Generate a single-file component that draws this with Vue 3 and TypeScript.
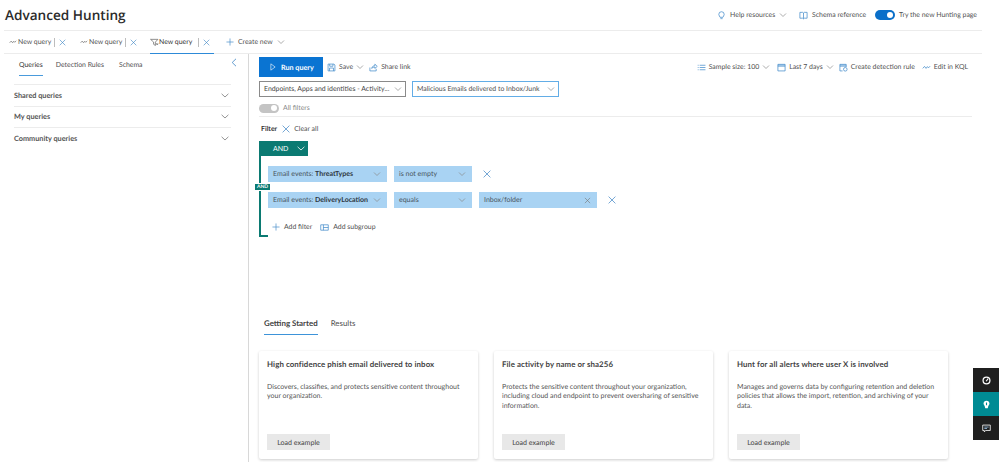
<script setup lang="ts">
const tabs = [
  { icon: 'kql', active: false },
  { icon: 'kql', active: false },
  { icon: 'filter', active: true },
]
const sections = ['Shared queries', 'My queries', 'Community queries']
const cards = [
  { title: 'High confidence phish email delivered to inbox', body: 'Discovers, classifies, and protects sensitive content throughout your organization.' },
  { title: 'File activity by name or sha256', body: 'Protects the sensitive content throughout your organization, including cloud and endpoint to prevent oversharing of sensitive information.' },
  { title: 'Hunt for all alerts where user X is involved', body: 'Manages and governs data by configuring retention and deletion policies that allows the import, retention, and archiving of your data.' },
]
</script>

<template>
  <div class="page">
    <header class="head">
      <h1 class="title">Advanced Hunting</h1>
      <div class="head-actions">
        <span class="act">
          <svg class="ic" viewBox="0 0 10 10"><path d="M3.4 7C3.2 5.8 2 5.400 2 3.800a3 3 0 0 1 6 0C8 5.400 6.800 5.800 6.600 7zM3.800 8.500h2.400" class="s-blue" /></svg>
          Help resources
          <svg class="chev" viewBox="0 0 8 8"><path d="M1 2.500l3 3 3-3" /></svg>
        </span>
        <span class="act gap-l">
          <svg class="ic" viewBox="0 0 10 10"><path d="M1 1.500h3.200L5 2.200l.8-.7H9v6.500H5.800L5 8.700 4.200 8H1zM5 2.200v6.500" class="s-blue" /></svg>
          <span>Schema reference</span>
        </span>
        <span class="act gap-m">
          <span class="switch on"><span class="knob"></span></span>
          Try the new Hunting page
        </span>
      </div>
    </header>

    <nav class="tabbar">
      <span v-for="(t, i) in tabs" :key="i" class="qtab" :class="{ active: t.active }">
        <svg v-if="t.icon === 'kql'" class="ic-s" viewBox="0 0 10 10"><path d="M.8 6l2-2.200L4.500 6 6 4l1.200 1.400L9 3.500" class="s-grey" /></svg>
        <svg v-else class="ic-s wide" viewBox="0 0 10 10"><path d="M.6 1.500h8.200L6 4.500v3.800L4 7V4.500zM7 5.800l2 2M9 5.800l-2 2" class="s-grey" /></svg>
        <span class="qname">New query</span>
        <i class="pipe"></i>
        <svg class="x" viewBox="0 0 8 8"><path d="M.8.8l6.400 6.400M7.200.8L.8 7.200" /></svg>
      </span>
      <span class="create">
        <svg class="plus" viewBox="0 0 9 9"><path d="M4.500.5v8M.5 4.500h8" /></svg>
        Create new
        <svg class="chev" viewBox="0 0 8 8"><path d="M1 2.500l3 3 3-3" /></svg>
      </span>
    </nav>

    <main class="main">
      <aside class="side">
        <svg class="collapse" viewBox="0 0 6 9"><path d="M5 .8L1.200 4.500 5 8.200" /></svg>
        <div class="side-tabs">
          <span class="stab on">Queries</span>
          <span class="stab det">Detection Rules</span>
          <span class="stab">Schema</span>
        </div>
        <div v-for="s in sections" :key="s" class="acc">
          <span>{{ s }}</span>
          <svg class="acc-chev" viewBox="0 0 8 5"><path d="M.6.8L4 4 7.400.8" /></svg>
        </div>
      </aside>

      <section class="content">
        <div class="toolbar">
          <button class="run">
            <svg class="play" viewBox="0 0 7 9"><path d="M1 .8L6 4.500 1 8.200z" /></svg>
            Run query
          </button>
          <span class="tool save">
            <svg class="ic" viewBox="0 0 10 10"><path d="M1.200 1.200h6.600l1 1v6.600H1.200zM3 1.200v2.400h3.600V1.200M2.800 8.800V5.600h4.400v3.200" class="s-blue" /></svg>
            Save
            <svg class="chev" viewBox="0 0 8 8"><path d="M1 2.500l3 3 3-3" /></svg>
          </span>
          <span class="tool share">
            <svg class="ic" viewBox="0 0 10 10"><path d="M1 5v3.800h7V6.500M3 6c.2-2 1.800-3 3.500-3V1.300L9.200 3.800 6.500 6V4.400C5 4.400 3.800 5 3 6z" class="s-blue" /></svg>
            Share link
          </span>
          <span class="spacer"></span>
          <span class="tool">
            <svg class="ic" viewBox="0 0 10 10"><path d="M.8 2.500h1M.8 5h1M.8 7.500h1M3 2.500h6.400M3 5h6.400M3 7.500h6.400" class="s-blue" /></svg>
            Sample size: 100
            <svg class="chev" viewBox="0 0 8 8"><path d="M1 2.500l3 3 3-3" /></svg>
          </span>
          <span class="tool">
            <svg class="ic" viewBox="0 0 10 10"><path d="M1 1.500h8v2H1z" class="band" /><path d="M1 1.500h8v7.300H1zM1 3.500h8" class="s-blue" /></svg>
            Last 7 days
            <svg class="chev" viewBox="0 0 8 8"><path d="M1 2.500l3 3 3-3" /></svg>
          </span>
          <span class="tool rule">
            <svg class="ic" viewBox="0 0 10 10"><path d="M1 1.500h7v2H1z" class="band" /><path d="M1 1.500h7v3M4 8.800H1v-7.300M1 3.500h7" class="s-blue" /><circle cx="7" cy="7" r="2" class="s-blue" /></svg>
            Create detection rule
          </span>
          <span class="tool">
            <svg class="ic" viewBox="0 0 10 10"><path d="M.8 6l2-2.200L4.500 6 6 4l1.200 1.400L9 3.500" class="s-blue" /></svg>
            Edit in KQL
          </span>
        </div>

        <div class="selects">
          <span class="sel dark">
            <span>Endpoints, Apps and identities - Activity...</span>
            <svg class="chev" viewBox="0 0 8 8"><path d="M1 2.500l3 3 3-3" /></svg>
          </span>
          <span class="sel light">
            <span>Malicious Emails delivered to Inbox/Junk</span>
            <svg class="chev" viewBox="0 0 8 8"><path d="M1 2.500l3 3 3-3" /></svg>
          </span>
        </div>

        <div class="allf">
          <span class="switch off"><span class="knob"></span></span>
          All filters
        </div>

        <div class="filter-head">
          <b>Filter</b>
          <svg class="x big" viewBox="0 0 8 8"><path d="M.6.6l6.800 6.800M7.400.6L.6 7.400" /></svg>
          <span>Clear all</span>
        </div>

        <div class="and-btn">
          <span>AND</span>
          <svg class="and-chev" viewBox="0 0 8 5"><path d="M.6.8L4 4 7.400.8" /></svg>
        </div>

        <div class="group">
          <span class="and-tag">AND</span>
          <div class="frow">
            <span class="fld f1"><span>Email events: <b>ThreatTypes</b></span><svg class="chev" viewBox="0 0 8 8"><path d="M1 2.500l3 3 3-3" /></svg></span>
            <span class="fld f2"><span>is not empty</span><svg class="chev" viewBox="0 0 8 8"><path d="M1 2.500l3 3 3-3" /></svg></span>
            <svg class="x rowx" viewBox="0 0 8 8"><path d="M.6.6l6.800 6.800M7.400.6L.6 7.400" /></svg>
          </div>
          <div class="frow">
            <span class="fld f1"><span>Email events: <b>DeliveryLocation</b></span><svg class="chev" viewBox="0 0 8 8"><path d="M1 2.500l3 3 3-3" /></svg></span>
            <span class="fld f2"><span>equals</span><svg class="chev" viewBox="0 0 8 8"><path d="M1 2.500l3 3 3-3" /></svg></span>
            <span class="fld f3"><span>Inbox/folder</span><svg class="chev-x" viewBox="0 0 8 8"><path d="M1 1l6 6M7 1L1 7" /></svg></span>
            <svg class="x rowx" viewBox="0 0 8 8"><path d="M.6.6l6.800 6.800M7.400.6L.6 7.400" /></svg>
          </div>
          <div class="adds">
            <span class="add"><svg class="plus" viewBox="0 0 9 9"><path d="M4.500.5v8M.5 4.500h8" /></svg>Add filter</span>
            <span class="add"><svg class="ic" viewBox="0 0 10 8"><path d="M.8 1h8.400v6H.8zM3.800 1v6M3.800 4h5.400" class="s-blue" /></svg>Add subgroup</span>
          </div>
        </div>

        <div class="rtabs">
          <span class="rtab on">Getting Started</span>
          <span class="rtab">Results</span>
        </div>

        <div class="cards">
          <article v-for="c in cards" :key="c.title" class="card">
            <h3>{{ c.title }}</h3>
            <p>{{ c.body }}</p>
            <button class="load">Load example</button>
          </article>
        </div>
      </section>
    </main>

    <div class="widget">
      <span class="w-item">
        <svg viewBox="0 0 10 10"><circle cx="5" cy="5" r="3.800" fill="none" stroke="#fff" stroke-width="1.400" /><path d="M6.800 3L4.600 5.800" stroke="#fff" stroke-width="1.200" /></svg>
      </span>
      <span class="w-item teal">
        <svg viewBox="0 0 10 10"><path d="M5 .8C7 .8 8.300 2.200 8.300 4 8.300 5.400 6.800 6.400 6.400 9.200H3.600C3.200 6.400 1.700 5.400 1.700 4 1.700 2.200 3 .8 5 .8z" fill="#fff" /><path d="M5 2.800v3" stroke="#008b94" stroke-width="1.200" /></svg>
      </span>
      <span class="w-item">
        <svg viewBox="0 0 10 10"><path d="M.8 1.200h8.400v6H4L2.600 8.800V7.200H.8z" fill="none" stroke="#fff" stroke-width=".9" /><path d="M2.600 3.400h4.800M2.600 5h3" fill="none" stroke="#9fc4e6" stroke-width=".9" /></svg>
      </span>
    </div>
  </div>
</template>

<style>
html, body { margin: 0; background: #fff; }
</style>

<style scoped>
.page {
  position: relative;
  width: 999px;
  height: 462px;
  overflow: hidden;
  background: #fff;
  font-family: "Lato", "Open Sans", sans-serif;
  font-size: 6.9px;
  text-rendering: geometricPrecision;
  color: #505050;
  white-space: nowrap;
  display: flex;
  flex-direction: column;
}
svg { display: block; flex: none; }
.s-blue { fill: none; stroke: #3f88c8; stroke-width: .8; }
.band { fill: #b9d6ef; }
.s-grey { fill: none; stroke: #666; stroke-width: .8; }

.head {
  height: 30px;
  flex: none;
  display: flex;
  align-items: center;
  justify-content: space-between;
  padding: 0 22px 0 5px;
  box-sizing: border-box;
}
.title { margin: 0 0 2px; font-family: "Open Sans", sans-serif; font-size: 13.600px; font-weight: 600; color: #2b2b2b; }
.head-actions { display: flex; align-items: center; }
.act { display: flex; align-items: center; gap: 4px; }
.gap-l { margin-left: 12px; }
.gap-m { margin-left: 9px; gap: 4px; }
.ic { width: 9px; height: 9px; }
.chev { width: 8px; height: 8px; }
.chev path { fill: none; stroke: #8a8a8a; stroke-width: .7; }

.switch { width: 20px; height: 10px; border-radius: 5px; position: relative; display: inline-block; flex: none; }
.switch.on { background: #0a6fc9; }
.switch.off { background: #c4c4c4; }
.knob { position: absolute; right: 2px; top: 2px; width: 6px; height: 6px; border-radius: 50%; background: #fff; }

.tabbar {
  margin: 0 17px 0 4px;
  height: 24px;
  flex: none;
  display: flex;
  align-items: stretch;
  border-top: 1px solid #ececec;
  border-bottom: 1px solid #ececec;
  box-sizing: border-box;
}
.qtab {
  display: flex;
  align-items: center;
  padding-left: 5px;
  width: 71px;
  box-sizing: border-box;
}
.qtab.active { color: #333; border-bottom: 1px solid #2d8ad8; height: 23px; margin: 0 0 -1px 4px; padding-left: 0; width: 64px; }
.qname { width: 34px; margin-left: 1px; }
.active .qname { width: 37px; margin-left: 0; }
.ic-s { width: 8px; height: 8px; }
.ic-s.wide { width: 9px; height: 9px; }
.pipe { width: 1px; height: 9px; background: #bdbdbd; margin: 0 4px 0 2px; }
.x { width: 7px; height: 7px; }
.x path { fill: none; stroke: #3b83c3; stroke-width: .7; }
.create { display: flex; align-items: center; gap: 4px; margin-left: 12px; }
.plus { width: 8px; height: 8px; }
.plus path { fill: none; stroke: #4d8fca; stroke-width: .8; }

.main { flex: 1; display: flex; min-height: 0; }
.side {
  width: 245px;
  margin-left: 4px;
  box-sizing: border-box;
  border-right: 1px solid #d8d8d8;
  position: relative;
  padding: 0 17px 0 10px;
  flex: none;
}
.collapse { position: absolute; right: 11px; top: 4px; width: 6px; height: 9px; }
.collapse path { fill: none; stroke: #3b83c3; stroke-width: .8; }
.side-tabs { display: flex; height: 30px; gap: 15px; padding-left: 5px; align-items: flex-start; }
.stab { padding-top: 7px; height: 22px; box-sizing: border-box; }
.stab.on { color: #333; border-bottom: 1px solid #4a9bdc; }
.det { margin-left: -2px; }
.acc {
  height: 21.500px;
  border-top: 1px solid #ececec;
  display: flex;
  align-items: center;
  justify-content: space-between;
  padding: 0 1px 0 0;
  font-size: 7.300px;
  font-weight: 700;
  color: #555;
  box-sizing: border-box;
}
.acc-chev { width: 8px; height: 5px; margin-right: 1px; }
.acc-chev path { fill: none; stroke: #666; stroke-width: .7; }

.content { flex: 1; padding: 3px 27px 0 10px; min-width: 0; }
.toolbar { display: flex; align-items: center; height: 20px; gap: 7px; padding-right: 4px; }
.spacer { flex: 1; }
.run {
  width: 64px;
  height: 20px;
  border: 0;
  padding: 0 0 0 11px;
  background: #0a74d2;
  color: #fff;
  font: 700 7.200px "Lato", sans-serif;
  text-rendering: geometricPrecision;
  display: flex;
  align-items: center;
  gap: 5px;
}
.play { width: 6px; height: 8px; }
.play path { fill: none; stroke: #fff; stroke-width: .7; }
.tool { display: flex; align-items: center; gap: 3px; white-space: nowrap; }
.save { margin-left: -3px; }
.share { margin-left: -2px; }
.rule { margin-left: -2px; }
.sel {
  height: 16px;
  width: 147px;
  box-sizing: border-box;
  display: flex;
  align-items: center;
  justify-content: space-between;
  padding: 0 3px 0 4px;
}
.selects { display: flex; gap: 6px; margin-top: 4px; }
.sel.dark { border: 1px solid #8a8a8a; color: #444; }
.sel.light { border: 1px solid #63ade6; }
.allf { display: flex; align-items: center; gap: 4px; height: 10px; margin-top: 6px; color: #8a8a8a; }
.allf .switch { width: 20px; height: 9px; }
.allf .knob { top: 1.500px; }
.filter-head {
  margin-top: 3px;
  border-top: 1px solid #ececec;
  padding-top: 5px;
  height: 13px;
  display: flex;
  align-items: center;
  gap: 4px;
}
.filter-head b { font-weight: 700; color: #333; margin-right: 1px; margin-left: 2px; }
.big { width: 8px; height: 8px; }
.and-btn {
  margin-top: 6px;
  width: 49px;
  height: 15px;
  background: #0b7a72;
  color: #fff;
  font-size: 7px;
  display: flex;
  align-items: center;
  justify-content: space-between;
  padding: 0 3px 0 14px;
  box-sizing: border-box;
}
.and-chev { width: 8px; height: 5px; }
.and-chev path { fill: none; stroke: #fff; stroke-width: .8; }
.group {
  position: relative;
  height: 81px;
  box-sizing: border-box;
  border-left: 2px solid #0b7a72;
  padding: 10px 0 0 7px;
}
.group::after {
  content: '';
  position: absolute;
  left: 0;
  bottom: 0;
  width: 7px;
  height: 2px;
  background: #0b7a72;
}
.and-tag {
  position: absolute;
  left: -7px;
  top: 27px;
  background: #0b7a72;
  color: #fff;
  font-size: 5px;
  font-weight: 700;
  line-height: 6px;
  width: 15px;
  text-align: center;
  border: 1px solid #fff;
}
.frow { display: flex; align-items: center; gap: 7px; height: 16px; margin-bottom: 10px; }
.fld {
  height: 16px;
  background: #a9d3f3;
  box-sizing: border-box;
  display: flex;
  align-items: center;
  justify-content: space-between;
  padding: 0 6px 0 5px;
  font-size: 7px;
  color: #4a5560;
}
.fld b { font-weight: 700; color: #2d3640; }
.f1 { width: 119px; }
.f2 { width: 78px; }
.f3 { width: 118px; }
.chev-x { width: 7px; height: 7px; }
.chev-x path { fill: none; stroke: #777; stroke-width: .7; }
.rowx { margin-left: 4px; width: 8px; height: 8px; }
.adds { display: flex; gap: 8px; padding-left: 4px; margin-top: 14px; height: 10px; }
.add { display: flex; align-items: center; gap: 4px; }
.rtabs { display: flex; gap: 13px; margin-top: 79px; padding-left: 5px; height: 19px; font-size: 7.900px; }
.rtab { padding-top: 2px; box-sizing: border-box; height: 19px; }
.rtab.on { font-weight: 700; color: #444; border-bottom: 1px solid #3d93d9; }
.cards { display: flex; gap: 16px; margin-top: 16px; }
.card {
  width: 219px;
  height: 108px;
  box-sizing: border-box;
  border-radius: 2px;
  box-shadow: 0 1px 3px rgba(0,0,0,.2);
  padding: 8px 8px;
  position: relative;
  color: #555;
  white-space: normal;
}
.card h3 { margin: 0; font-size: 7.850px; font-weight: 700; color: #444; letter-spacing: .1px; }
.card p { margin: 14px 0 0; line-height: 9.300px; font-size: 7px; }
.load {
  position: absolute;
  left: 8px;
  bottom: 9px;
  width: 63px;
  height: 16px;
  background: #e8e8e8;
  border: 0;
  font: 7.100px "Lato", sans-serif;
  text-rendering: geometricPrecision;
  color: #444;
  padding: 0;
}
.widget { position: absolute; right: 0; top: 368px; width: 26px; display: flex; flex-direction: column; }
.w-item { height: 24px; background: #1f1f1f; display: flex; align-items: center; justify-content: center; }
.w-item.teal { background: #008b94; }
.w-item svg { width: 9px; height: 9px; }
</style>
